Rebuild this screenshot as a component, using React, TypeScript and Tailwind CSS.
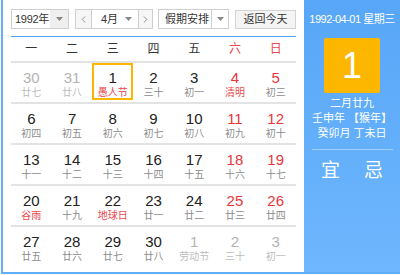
import { ChevronLeft, ChevronRight } from 'lucide-react';

type Day = {
  n: number;
  l: string;
  other?: boolean;
  redNum?: boolean;
  redLunar?: boolean;
  selected?: boolean;
};

const weeks: Day[][] = [
  [
    { n: 30, l: '廿七', other: true },
    { n: 31, l: '廿八', other: true },
    { n: 1, l: '愚人节', redLunar: true, selected: true },
    { n: 2, l: '三十' },
    { n: 3, l: '初一' },
    { n: 4, l: '清明', redNum: true, redLunar: true },
    { n: 5, l: '初三', redNum: true },
  ],
  [
    { n: 6, l: '初四' },
    { n: 7, l: '初五' },
    { n: 8, l: '初六' },
    { n: 9, l: '初七' },
    { n: 10, l: '初八' },
    { n: 11, l: '初九', redNum: true },
    { n: 12, l: '初十', redNum: true },
  ],
  [
    { n: 13, l: '十一' },
    { n: 14, l: '十二' },
    { n: 15, l: '十三' },
    { n: 16, l: '十四' },
    { n: 17, l: '十五' },
    { n: 18, l: '十六', redNum: true },
    { n: 19, l: '十七', redNum: true },
  ],
  [
    { n: 20, l: '谷雨', redLunar: true },
    { n: 21, l: '十九' },
    { n: 22, l: '地球日', redLunar: true },
    { n: 23, l: '廿一' },
    { n: 24, l: '廿二' },
    { n: 25, l: '廿三', redNum: true },
    { n: 26, l: '廿四', redNum: true },
  ],
  [
    { n: 27, l: '廿五' },
    { n: 28, l: '廿六' },
    { n: 29, l: '廿七' },
    { n: 30, l: '廿八' },
    { n: 1, l: '劳动节', other: true },
    { n: 2, l: '三十', other: true },
    { n: 3, l: '初一', other: true },
  ],
];

const weekdays = ['一', '二', '三', '四', '五', '六', '日'];

function Caret() {
  return (
    <svg width="7" height="4" viewBox="0 0 7 4" className="shrink-0">
      <path d="M0 0 L7 0 L3.5 4 Z" fill="#888" />
    </svg>
  );
}

function DayCell({ d }: { d: Day }) {
  const numColor = d.other ? 'text-[#b3b3b3]' : d.redNum ? 'text-[#e8363b]' : 'text-[#222]';
  const lunarColor = d.redLunar ? 'text-[#e8484c]' : d.other ? 'text-[#bcbcbc]' : 'text-[#8c8c8c]';
  return (
    <div
      className={`h-[37px] flex flex-col items-center pt-[6px] border-2 ${
        d.selected ? 'border-[#fdb600]' : 'border-transparent'
      }`}
    >
      <span className={`text-[15px] leading-[14px] ${numColor}`}>{d.n}</span>
      <span className={`text-[10px] leading-[13px] mt-px whitespace-nowrap ${lunarColor}`}>{d.l}</span>
    </div>
  );
}

export default function App() {
  return (
    <div
      className="w-[400px] h-[275px] bg-white pl-px"
      style={{ fontFamily: '"Liberation Sans", "Noto Sans CJK SC", sans-serif' }}
    >
      <div className="flex h-[274px] border-l-2 border-b-2 border-[#62aefb]">
        {/* Left: calendar */}
        <div className="w-[301px] pl-2 pr-2 pt-[9px] bg-white">
          {/* Toolbar */}
          <div className="flex items-center h-[20px] text-[11px] text-[#333] whitespace-nowrap">
            <div className="flex h-[20px] w-[58px] border border-[#cfcfcf]">
              <span className="flex-1 flex items-center pl-[3px] bg-white tracking-[-0.3px]">1992年</span>
              <span className="w-[18px] flex items-center justify-center bg-[#efefef]">
                <Caret />
              </span>
            </div>
            <div className="flex h-[20px] w-[78px] ml-[6px] border border-[#cfcfcf]">
              <span className="w-[16px] flex items-center justify-center bg-[#f6f6f6] border-r border-[#cfcfcf]">
                <ChevronLeft size={11} strokeWidth={1.5} className="text-[#666]" />
              </span>
              <span className="flex-1 flex items-center justify-between pl-[9px] pr-[6px] bg-white">
                4月
                <Caret />
              </span>
              <span className="w-[14px] flex items-center justify-center bg-[#f6f6f6] border-l border-[#cfcfcf]">
                <ChevronRight size={11} strokeWidth={1.5} className="text-[#666]" />
              </span>
            </div>
            <div className="flex h-[20px] w-[71px] ml-[5px] border border-[#cfcfcf]">
              <span className="flex-1 flex items-center pl-[6px] bg-white">假期安排</span>
              <span className="w-[17px] flex items-center justify-center bg-white border-l border-[#cfcfcf]">
                <Caret />
              </span>
            </div>
            <button className="ml-auto h-[19px] w-[61px] flex items-center justify-center bg-[#f4f4f4] border border-[#d3d3d3] text-[11px] text-[#333]">
              返回今天
            </button>
          </div>

          <div className="mt-[7px] h-px bg-[#4fa2f4]" />

          {/* Week header */}
          <div className="grid grid-cols-7 h-[24px] items-center text-[12px]">
            {weekdays.map((w, i) => (
              <span key={w} className={`text-center ${i >= 5 ? 'text-[#e8484c]' : 'text-[#333]'}`}>
                {w}
              </span>
            ))}
          </div>
          <div className="h-[2px] bg-[#e3e3e3]" />

          {/* Days */}
          {weeks.map((week, wi) => (
            <div key={wi}>
              <div className="grid grid-cols-7 h-[39px]">
                {week.map((d, di) => (
                  <DayCell key={di} d={d} />
                ))}
              </div>
              {wi < weeks.length - 1 && <div className="h-[2px] bg-[#e3e3e3]" />}
            </div>
          ))}
        </div>

        {/* Right: selected day detail */}
        <div className="flex-1 flex flex-col items-center bg-gradient-to-b from-[#57a6f7] to-[#6fb7fe] text-white">
          <div className="mt-[12px] text-[11px] leading-[14px] tracking-[-0.5px] whitespace-nowrap">1992-04-01 星期三</div>
          <div className="mt-[12px] w-[56px] h-[55px] rounded-[2px] bg-[#fdb700] flex items-center justify-center">
            <span className="text-[36px] leading-none">1</span>
          </div>
          <div className="mt-[3px] text-[11px] leading-[15px] text-center whitespace-nowrap">
            <div>二月廿九</div>
            <div>壬申年 【猴年】</div>
            <div>癸卯月 丁未日</div>
          </div>
          <div className="mt-[8px] w-[81px] h-px bg-[#9fd0ff]" />
          <div className="mt-[10px] flex gap-[24px] text-[19px] leading-[22px]">
            <span>宜</span>
            <span>忌</span>
          </div>
        </div>
      </div>
    </div>
  );
}
